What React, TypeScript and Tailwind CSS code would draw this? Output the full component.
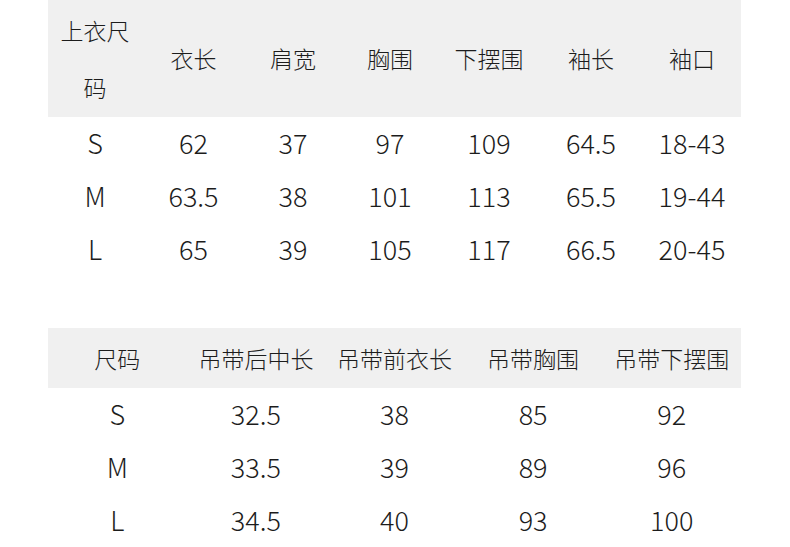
import React from "react";

const font = { fontFamily: '"Noto Sans CJK SC", "Noto Sans", sans-serif' };

// 上衣尺码 table
const topHead = ["上衣尺码", "衣长", "肩宽", "胸围", "下摆围", "袖长", "袖口"];
const topRows = [
  ["S", "62", "37", "97", "109", "64.5", "18-43"],
  ["M", "63.5", "38", "101", "113", "65.5", "19-44"],
  ["L", "65", "39", "105", "117", "66.5", "20-45"],
];

// 吊带 table
const camiHead = ["尺码", "吊带后中长", "吊带前衣长", "吊带胸围", "吊带下摆围"];
const camiRows = [
  ["S", "32.5", "38", "85", "92"],
  ["M", "33.5", "39", "89", "96"],
  ["L", "34.5", "40", "93", "100"],
];

export default function App() {
  return (
    <div className="w-[790px] h-[547px] bg-white text-[#1c1c1c] font-light overflow-hidden" style={font}>
      <div className="ml-12 w-[693px]">
        {/* top table */}
        <div className="grid grid-cols-[94px_103px_96px_98px_100px_104px_98px] bg-[#f0f0f0] h-[117px] items-center text-[23px] leading-[57px]">
          {topHead.map((h) => (
            <div key={h} className="px-2 text-center">
              {h}
            </div>
          ))}
        </div>
        {topRows.map((r) => (
          <div
            key={r[0]}
            className="grid grid-cols-[94px_103px_96px_98px_100px_104px_98px] h-[53px] items-center text-[27px]"
          >
            {r.map((c, i) => (
              <div key={i} className="text-center">
                {c}
              </div>
            ))}
          </div>
        ))}

        {/* cami table */}
        <div className="mt-[52px] grid grid-cols-5 bg-[#f0f0f0] h-[60px] items-center text-[23px]">
          {camiHead.map((h) => (
            <div key={h} className="text-center whitespace-nowrap">
              {h}
            </div>
          ))}
        </div>
        {camiRows.map((r) => (
          <div key={r[0]} className="grid grid-cols-5 h-[53px] items-center text-[27px]">
            {r.map((c, i) => (
              <div key={i} className="text-center">
                {c}
              </div>
            ))}
          </div>
        ))}
      </div>
    </div>
  );
}
